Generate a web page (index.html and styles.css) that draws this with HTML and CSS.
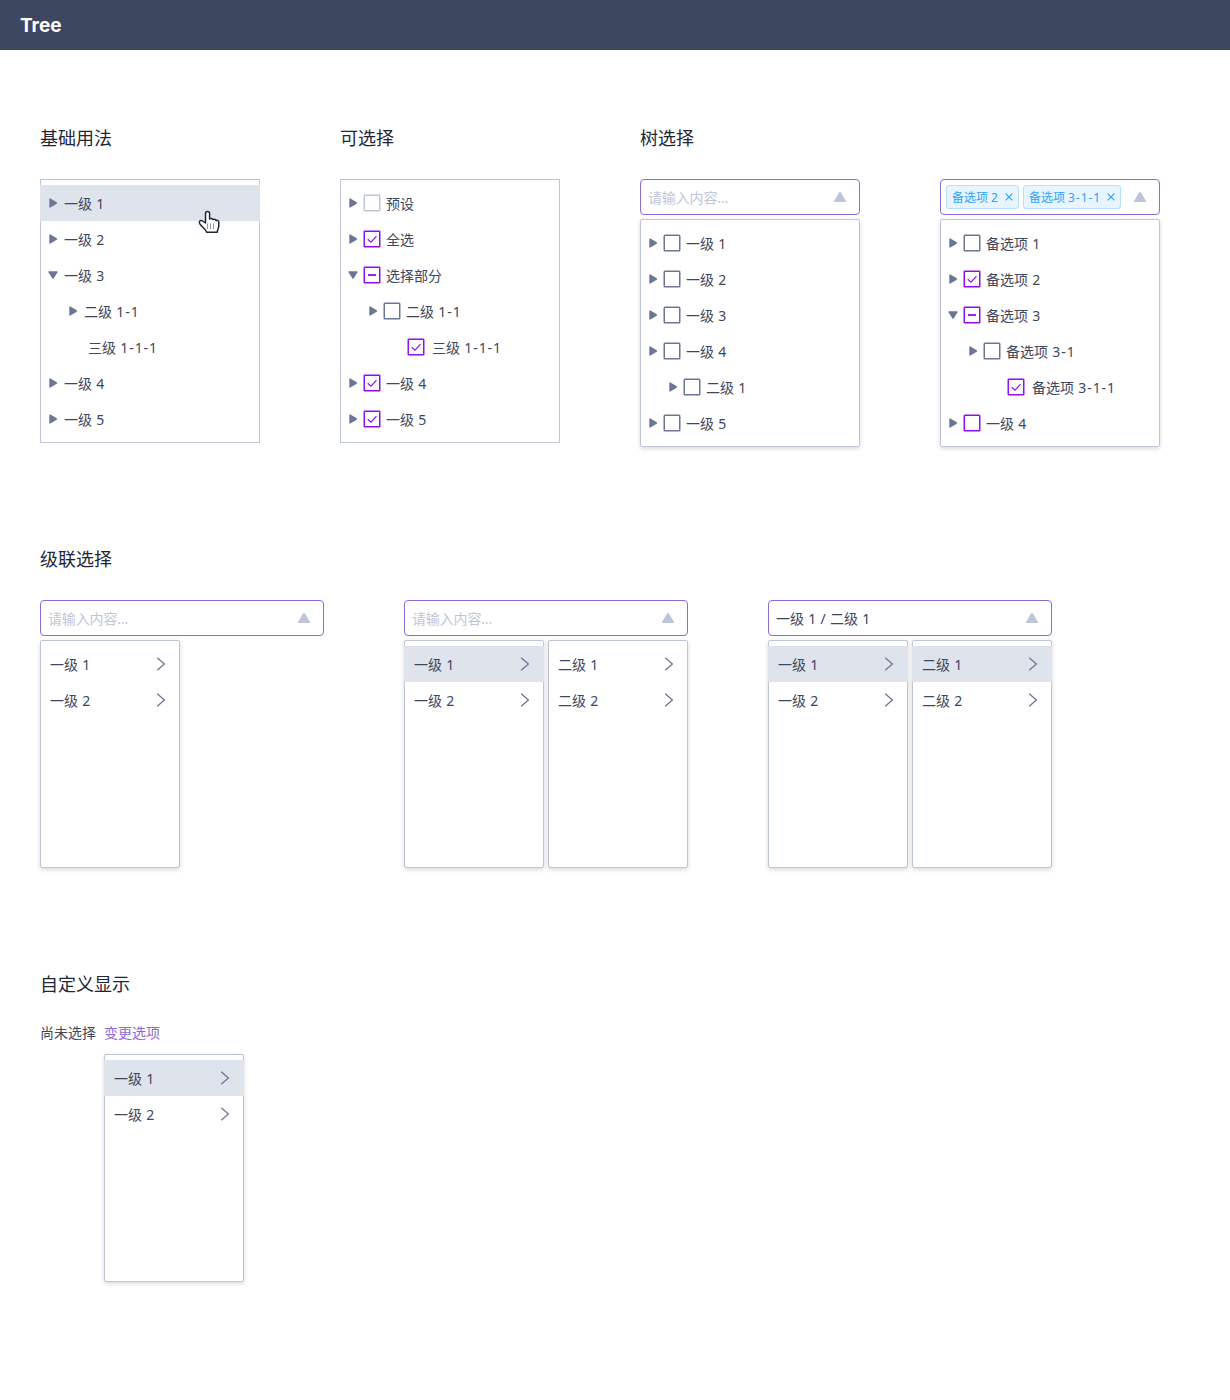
FILE: index.html
```html
<!DOCTYPE html>
<html lang="zh-CN">
<head>
<meta charset="utf-8">
<title>Tree</title>
<link rel="stylesheet" href="styles.css">
</head>
<body>
<svg class="defs" width="0" height="0">
  <symbol id="right" viewBox="0 0 12 12"><path d="M2.3 2.1Q2.3.9 3.4 1.4L9.7 5.2Q10.7 6 9.7 6.8L3.4 10.5Q2.3 11 2.3 9.9Z" fill="#6b7694"/></symbol>
  <symbol id="down" viewBox="0 0 12 12"><path d="M2.1 2.2H9.9Q11.1 2.2 10.5 3.3L6.8 9.2Q6 10.2 5.2 9.2L1.5 3.3Q.9 2.2 2.1 2.2Z" fill="#6b7694"/></symbol>
  <symbol id="up" viewBox="0 0 12 12"><path d="M1 11Q-.5 11 .3 9.6L5 1.6Q6 .2 7 1.6L11.7 9.6Q12.5 11 11 11Z" fill="#bfc5d9"/></symbol>
  <symbol id="box" viewBox="0 0 18 18"><rect x="1.25" y="1.25" width="15.5" height="15.5" rx=".8" fill="#fff" stroke="currentColor" stroke-width="1.5"/></symbol>
  <symbol id="check" viewBox="0 0 18 18"><rect x="1.25" y="1.25" width="15.5" height="15.5" rx=".5" fill="#fff" stroke="currentColor" stroke-width="1.5"/><path d="M4.7 9.2 8 12.2 13.5 6.2" fill="none" stroke="currentColor" stroke-width="1.2"/></symbol>
  <symbol id="part" viewBox="0 0 18 18"><rect x="1.25" y="1.25" width="15.5" height="15.5" rx=".5" fill="#fff" stroke="currentColor" stroke-width="1.5"/><path d="M5 9H13" stroke="currentColor" stroke-width="1.8"/></symbol>
  <symbol id="next" viewBox="0 0 10 14"><path d="M1.2 .8 8.4 7 1.2 13.2" fill="none" stroke="#6b7694" stroke-width="1.25"/></symbol>
  <symbol id="close" viewBox="0 0 8 8"><path d="M.6.6 7.4 7.4M7.4.6.6 7.4" stroke="#2ea3f7" stroke-width="1.15"/></symbol>
</svg>

<header class="topbar">Tree</header>

<main class="page">
  <div class="trees">
    <section>
      <h2>基础用法</h2>
      <div class="tree">
        <div class="row active"><svg class="arrow"><use href="#right"/></svg><span>一级 1</span>
          <svg class="pointer" viewBox="0 0 22 24"><path d="M7.5 13V3.6C7.5.8 11.6.8 11.6 3.6V9C12.5 8.2 14.5 8.3 15 9.6 16.2 8.9 17.7 9.4 18 10.5 19.8 10 20.8 11 20.8 12.5V15.6C20.8 18.5 19.4 19.5 19.2 22.2H8.6C8 19.5 5 18.1 2.1 14.2 .2 11.5 2.6 9.5 4.6 11Z" fill="#fff" stroke="#1f2638" stroke-width="1.5" stroke-linejoin="round"/><path d="M9.5 13.5V19M12.5 13.5V19M15.5 13.5V19" stroke="#777d8c" stroke-width=".8"/></svg>
        </div>
        <div class="row"><svg class="arrow"><use href="#right"/></svg><span>一级 2</span></div>
        <div class="row"><svg class="arrow"><use href="#down"/></svg><span>一级 3</span></div>
        <div class="row level-2"><svg class="arrow"><use href="#right"/></svg><span>二级 <b>1-1</b></span></div>
        <div class="row leaf"><span>三级 <b>1-1-1</b></span></div>
        <div class="row"><svg class="arrow"><use href="#right"/></svg><span>一级 4</span></div>
        <div class="row"><svg class="arrow"><use href="#right"/></svg><span>一级 5</span></div>
      </div>
    </section>

    <section>
      <h2>可选择</h2>
      <div class="tree">
        <div class="row"><svg class="arrow"><use href="#right"/></svg><svg class="box disabled"><use href="#box"/></svg><span>预设</span></div>
        <div class="row"><svg class="arrow"><use href="#right"/></svg><svg class="box on"><use href="#check"/></svg><span>全选</span></div>
        <div class="row"><svg class="arrow"><use href="#down"/></svg><svg class="box on"><use href="#part"/></svg><span>选择部分</span></div>
        <div class="row level-2"><svg class="arrow"><use href="#right"/></svg><svg class="box"><use href="#box"/></svg><span>二级 <b>1-1</b></span></div>
        <div class="row level-3"><svg class="box on"><use href="#check"/></svg><span>三级 <b>1-1-1</b></span></div>
        <div class="row"><svg class="arrow"><use href="#right"/></svg><svg class="box on"><use href="#check"/></svg><span>一级 4</span></div>
        <div class="row"><svg class="arrow"><use href="#right"/></svg><svg class="box on"><use href="#check"/></svg><span>一级 5</span></div>
      </div>
    </section>

    <section>
      <h2>树选择</h2>
      <div class="select"><span class="placeholder">请输入内容...</span><svg class="caret"><use href="#up"/></svg></div>
      <div class="tree dropdown">
        <div class="row"><svg class="arrow"><use href="#right"/></svg><svg class="box"><use href="#box"/></svg><span>一级 1</span></div>
        <div class="row"><svg class="arrow"><use href="#right"/></svg><svg class="box"><use href="#box"/></svg><span>一级 2</span></div>
        <div class="row"><svg class="arrow"><use href="#right"/></svg><svg class="box"><use href="#box"/></svg><span>一级 3</span></div>
        <div class="row"><svg class="arrow"><use href="#right"/></svg><svg class="box"><use href="#box"/></svg><span>一级 4</span></div>
        <div class="row level-2"><svg class="arrow"><use href="#right"/></svg><svg class="box"><use href="#box"/></svg><span>二级 1</span></div>
        <div class="row"><svg class="arrow"><use href="#right"/></svg><svg class="box"><use href="#box"/></svg><span>一级 5</span></div>
      </div>
    </section>

    <section class="untitled">
      <div class="select with-tags">
        <div class="tag"><span>备选项 2</span><svg class="close"><use href="#close"/></svg></div>
        <div class="tag"><span>备选项 <b>3-1-1</b></span><svg class="close"><use href="#close"/></svg></div>
        <svg class="caret"><use href="#up"/></svg>
      </div>
      <div class="tree dropdown">
        <div class="row"><svg class="arrow"><use href="#right"/></svg><svg class="box"><use href="#box"/></svg><span>备选项 1</span></div>
        <div class="row"><svg class="arrow"><use href="#right"/></svg><svg class="box on"><use href="#check"/></svg><span>备选项 2</span></div>
        <div class="row"><svg class="arrow"><use href="#down"/></svg><svg class="box on"><use href="#part"/></svg><span>备选项 3</span></div>
        <div class="row level-2"><svg class="arrow"><use href="#right"/></svg><svg class="box"><use href="#box"/></svg><span>备选项 <b>3-1</b></span></div>
        <div class="row level-3"><svg class="box on"><use href="#check"/></svg><span>备选项 <b>3-1-1</b></span></div>
        <div class="row"><svg class="arrow"><use href="#right"/></svg><svg class="box on"><use href="#box"/></svg><span>一级 4</span></div>
      </div>
    </section>
  </div>

  <section class="cascade-section">
    <h2>级联选择</h2>
    <div class="cascades">
      <div class="cascade">
        <div class="select"><span class="placeholder">请输入内容...</span><svg class="caret"><use href="#up"/></svg></div>
        <div class="menus">
          <div class="menu"><div class="option"><span>一级 1</span><svg><use href="#next"/></svg></div><div class="option"><span>一级 2</span><svg><use href="#next"/></svg></div></div>
        </div>
      </div>
      <div class="cascade">
        <div class="select"><span class="placeholder">请输入内容...</span><svg class="caret"><use href="#up"/></svg></div>
        <div class="menus">
          <div class="menu"><div class="option active"><span>一级 1</span><svg><use href="#next"/></svg></div><div class="option"><span>一级 2</span><svg><use href="#next"/></svg></div></div>
          <div class="menu"><div class="option"><span>二级 1</span><svg><use href="#next"/></svg></div><div class="option"><span>二级 2</span><svg><use href="#next"/></svg></div></div>
        </div>
      </div>
      <div class="cascade">
        <div class="select"><span>一级 1 / 二级 1</span><svg class="caret"><use href="#up"/></svg></div>
        <div class="menus">
          <div class="menu"><div class="option active"><span>一级 1</span><svg><use href="#next"/></svg></div><div class="option"><span>一级 2</span><svg><use href="#next"/></svg></div></div>
          <div class="menu"><div class="option active"><span>二级 1</span><svg><use href="#next"/></svg></div><div class="option"><span>二级 2</span><svg><use href="#next"/></svg></div></div>
        </div>
      </div>
    </div>
  </section>

  <section class="custom-section">
    <h2>自定义显示</h2>
    <div class="custom">
      <span>尚未选择</span>
      <div>
        <a class="change">变更选项</a>
        <div class="menu"><div class="option active"><span>一级 1</span><svg><use href="#next"/></svg></div><div class="option"><span>一级 2</span><svg><use href="#next"/></svg></div></div>
      </div>
    </div>
  </section>
</main>
</body>
</html>
```
FILE: styles.css
```css
* { box-sizing: border-box; }
body {
  margin: 0;
  min-height: 1400px;
  background: #fff;
  color: #3d475f;
  font: 14px/20px "Noto Sans", "Noto Sans CJK SC", sans-serif;
  word-spacing: .6px;
}
svg { display: block; flex: none; }
b { font-weight: 400; letter-spacing: .95px; margin-right: -.95px; }
.defs { position: absolute; }
.topbar {
  height: 50px;
  padding-left: 20px;
  background: #3d475f;
  color: #fff;
  font-family: "Inter", "Liberation Sans", sans-serif;
  font-size: 19px;
  font-weight: 700;
  line-height: 51px;
}
.page { padding: 73px 40px 0; }
h2 {
  height: 28px;
  margin: 0 0 28px;
  color: #1f2638;
  font-size: 18px;
  line-height: 30px;
  font-weight: 400;
}
.trees { display: flex; gap: 80px; height: 421px; }
.trees section { width: 220px; }
.trees .untitled { padding-top: 56px; }

.tree { padding: 5px 0; border: 1px solid #bfc5d9; }
.row {
  display: flex;
  align-items: center;
  height: 36px;
  margin: 0 -1px;
  padding-left: 7px;
}
.row span { white-space: pre; }
.row span, .option span, .select span { padding-top: 2px; }
.row.active, .option.active { background: #dfe3ec; }
.level-2 { padding-left: 27px; }
.level-3 { padding-left: 67px; }
.leaf { padding-left: 48px; }
.arrow { width: 12px; height: 12px; margin-right: 5px; }
.box { width: 18px; height: 18px; margin: 0 5px 0 -1px; color: #6b7694; }
.level-3 .box { margin: 0 7px 0 0; }
.box.on { color: #8d0ff5; }
.box.disabled { color: #bfc5d9; }
.row.active { position: relative; }
.pointer { position: absolute; left: 157.5px; top: 25px; width: 22px; height: 24px; }

.select {
  display: flex;
  align-items: center;
  justify-content: space-between;
  height: 36px;
  margin-bottom: 4px;
  padding: 0 13px 0 7px;
  border: 1px solid #8b6bd6;
  border-radius: 4px;
}
.select .placeholder { color: #c0c6da; letter-spacing: -.15px; }
.caret { width: 12px; height: 12px; }
.dropdown, .menu { border-radius: 2px; box-shadow: 0 2px 4px rgba(0, 0, 0, .12), 0 0 6px rgba(0, 0, 0, .04); }
.with-tags { justify-content: flex-start; gap: 4px; padding-left: 5px; }
.with-tags .caret { margin-left: auto; }
.tag {
  display: flex;
  align-items: center;
  gap: 7px;
  height: 24px;
  padding: 0 5px;
  border: 1px solid #b8e0fc;
  border-radius: 3px;
  background: #e8f5ff;
  color: #2ea3f7;
  font-size: 12px;
  white-space: nowrap;
  word-spacing: 0;
}
.tag b { letter-spacing: .9px; margin-right: -.9px; }
.close { width: 8px; height: 8px; }

.cascades { display: flex; gap: 80px; }
.cascade { width: 284px; }
.menus { display: flex; gap: 4px; }
.menu { width: 140px; height: 228px; padding: 5px 0; border: 1px solid #bfc5d9; background: #fff; }
.option {
  display: flex;
  align-items: center;
  justify-content: space-between;
  height: 36px;
  margin: 0 -1px;
  padding: 0 14px 0 10px;
}
.option svg { width: 10px; height: 14px; }
.custom-section { margin-top: 101px; }
.custom { display: flex; gap: 8px; margin-top: -2px; }
.change { display: block; margin-bottom: 11px; color: #8b6bd6; }
```
